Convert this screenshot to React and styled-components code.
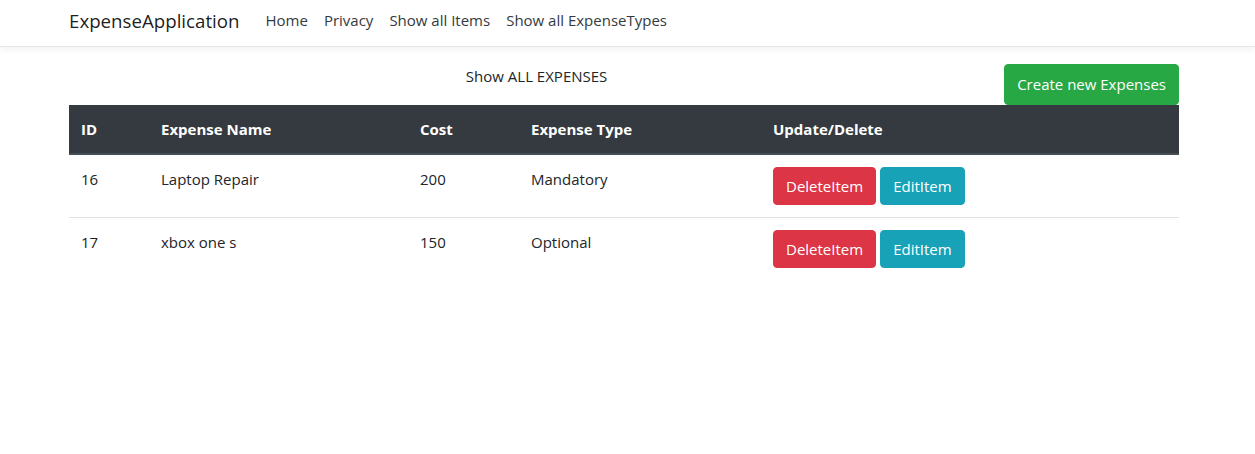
import React from "react";
import styled, { createGlobalStyle } from "styled-components";

const expenses = [
  { id: 16, name: "Laptop Repair", cost: 200, type: "Mandatory" },
  { id: 17, name: "xbox one s", cost: 150, type: "Optional" },
];

const columns = [
  { label: "ID", width: 80 },
  { label: "Expense Name", width: 259 },
  { label: "Cost", width: 111 },
  { label: "Expense Type", width: 242 },
  { label: "Update/Delete", width: 418 },
];

const GlobalStyle = createGlobalStyle`
  * { box-sizing: border-box; }
  body {
    margin: 0;
    background: #fff;
    color: #212529;
    font-family: "Segoe UI", "Open Sans", "Noto Sans", sans-serif;
    font-size: 15px;
    line-height: 24px;
  }
`;

const App = () => {
  return (
    <>
      <GlobalStyle />
      <Navbar>
        <Inner>
          <Brand>ExpenseApplication</Brand>
          <NavList>
            <NavLink>Home</NavLink>
            <NavLink>Privacy</NavLink>
            <NavLink>Show all Items</NavLink>
            <NavLink>Show all ExpenseTypes</NavLink>
          </NavList>
        </Inner>
      </Navbar>
      <Main>
        <TopRow>
          <Title>Show ALL EXPENSES</Title>
          <Button variant="success" large>
            Create new Expenses
          </Button>
        </TopRow>
        <Table>
          <colgroup>
            {columns.map((c) => (
              <col key={c.label} style={{ width: c.width }} />
            ))}
          </colgroup>
          <thead>
            <tr>
              {columns.map((c) => (
                <Th key={c.label}>{c.label}</Th>
              ))}
            </tr>
          </thead>
          <tbody>
            {expenses.map((e) => (
              <tr key={e.id}>
                <Td>{e.id}</Td>
                <Td>{e.name}</Td>
                <Td>{e.cost}</Td>
                <Td>{e.type}</Td>
                <Td>
                  <Actions>
                    <Button variant="danger">DeleteItem</Button>
                    <Button variant="info">EditItem</Button>
                  </Actions>
                </Td>
              </tr>
            ))}
          </tbody>
        </Table>
      </Main>
    </>
  );
};

const colors = {
  success: "#28a745",
  danger: "#dc3545",
  info: "#17a2b8",
};

const Navbar = styled.nav`
  height: 47px;
  border-bottom: 1px solid #e5e5e5;
  box-shadow: 0 3px 6px rgba(0, 0, 0, 0.05);
  margin-bottom: 17px;
`;

const Inner = styled.div`
  display: flex;
  align-items: center;
  height: 100%;
  padding: 0 76px 0 69px;
`;

const Brand = styled.a`
  font-size: 18.7px;
  color: rgba(0, 0, 0, 0.9);
  margin-right: 18px;
  padding-bottom: 4px;
`;

const NavList = styled.div`
  display: flex;
  padding-bottom: 6px;
`;

const NavLink = styled.a`
  color: #343a40;
  padding: 0 8px;
`;

const Main = styled.main`
  padding: 0 76px 0 69px;
`;

const TopRow = styled.div`
  display: flex;
  align-items: flex-start;
`;

const Title = styled.p`
  flex: 1;
  margin: 0;
  text-align: center;
`;

const Button = styled.button`
  font-family: inherit;
  font-size: 15px;
  line-height: 24px;
  color: #fff;
  background: ${(p) => colors[p.variant]};
  border: 1px solid ${(p) => colors[p.variant]};
  border-radius: 4px;
  padding: ${(p) => (p.large ? "7px 12px 8px" : "6px 12px")};
  cursor: pointer;
`;

const Table = styled.table`
  width: 1110px;
  border-collapse: collapse;
  table-layout: fixed;
`;

const Th = styled.th`
  background: #343a40;
  color: #fff;
  text-align: left;
  font-weight: 700;
  padding: 12px;
  border-bottom: 2px solid #454d55;
`;

const Td = styled.td`
  padding: 12px;
  vertical-align: top;
  border-top: 1px solid #dee2e6;
  tr:first-child & {
    border-top: none;
  }
`;

const Actions = styled.div`
  display: flex;
  gap: 4px;
`;

export default App;
